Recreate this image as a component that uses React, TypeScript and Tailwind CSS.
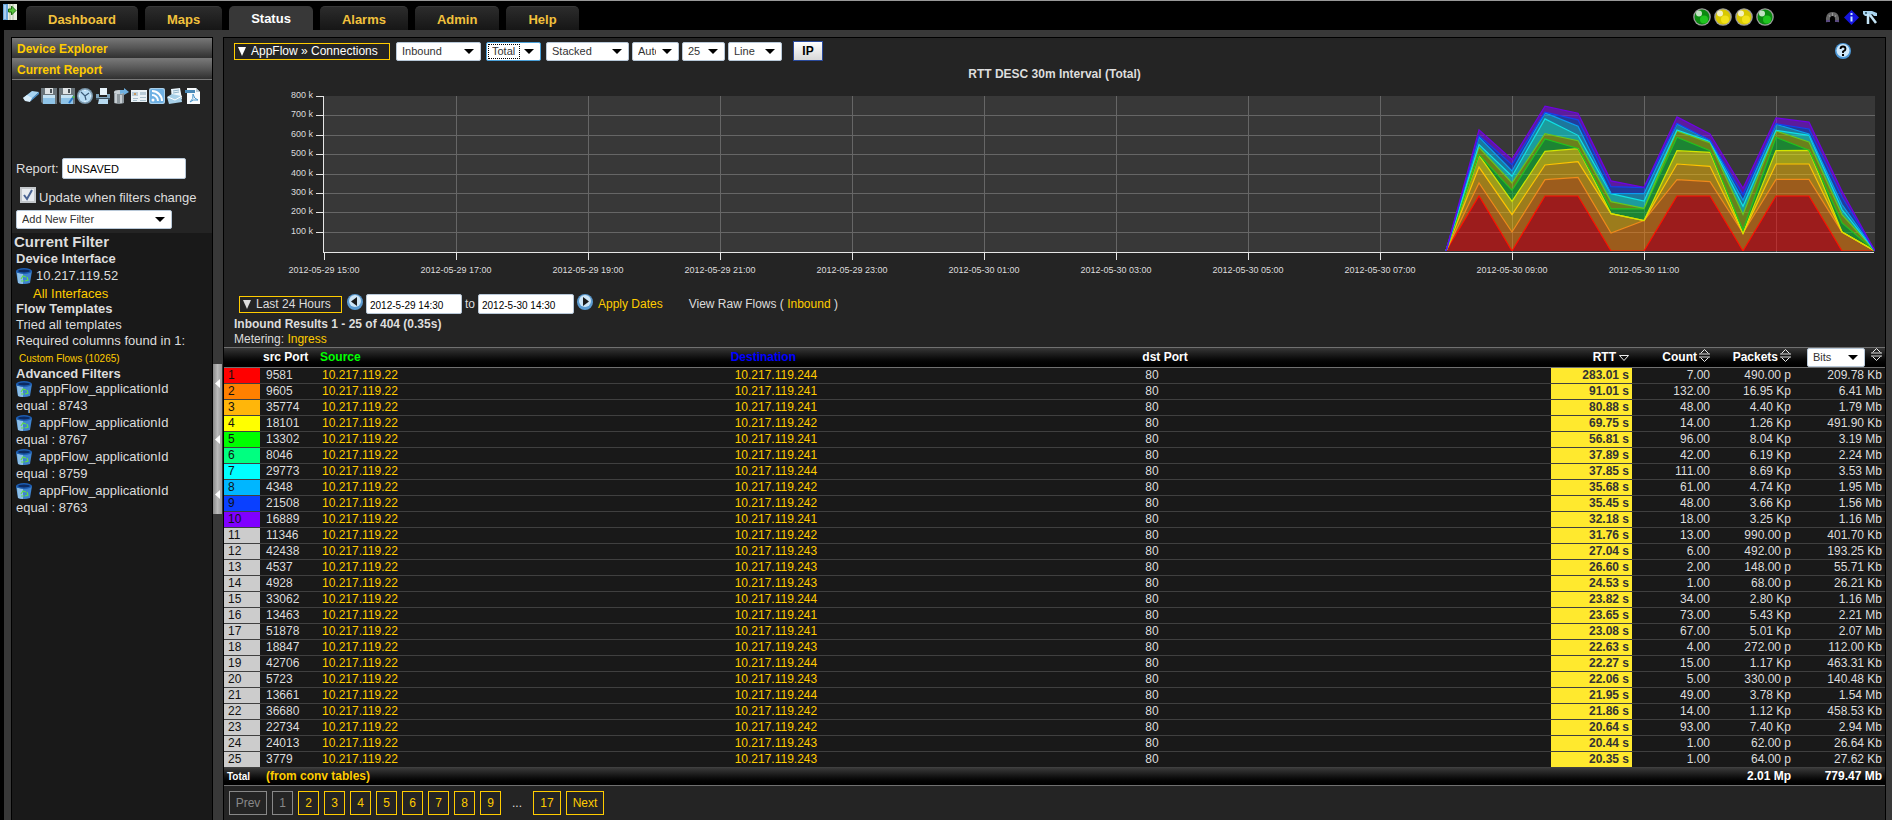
import { useState } from 'react';
import type { ReactNode } from 'react';
import clsx from 'clsx';

const tabs = ['Dashboard', 'Maps', 'Status', 'Alarms', 'Admin', 'Help'];

const appFilters = [8743, 8767, 8759, 8763];

const rankColors = [
  'bg-[#ff0000]',
  'bg-[#ff8000]',
  'bg-[#ffb60a]',
  'bg-[#ffff00]',
  'bg-[#00ff00]',
  'bg-[#00ff80]',
  'bg-[#00ffff]',
  'bg-[#00b6ff]',
  'bg-[#0a40ff]',
  'bg-[#8000ff]',
];

// src port, last octet of the destination, rtt, count, packets, bits
const rows: [string, string, string, string, string, string][] = [
  ['9581', '244', '283.01 s', '7.00', '490.00 p', '209.78 Kb'],
  ['9605', '241', '91.01 s', '132.00', '16.95 Kp', '6.41 Mb'],
  ['35774', '241', '80.88 s', '48.00', '4.40 Kp', '1.79 Mb'],
  ['18101', '242', '69.75 s', '14.00', '1.26 Kp', '491.90 Kb'],
  ['13302', '241', '56.81 s', '96.00', '8.04 Kp', '3.19 Mb'],
  ['8046', '241', '37.89 s', '42.00', '6.19 Kp', '2.24 Mb'],
  ['29773', '244', '37.85 s', '111.00', '8.69 Kp', '3.53 Mb'],
  ['4348', '242', '35.68 s', '61.00', '4.74 Kp', '1.95 Mb'],
  ['21508', '242', '35.45 s', '48.00', '3.66 Kp', '1.56 Mb'],
  ['16889', '241', '32.18 s', '18.00', '3.25 Kp', '1.16 Mb'],
  ['11346', '242', '31.76 s', '13.00', '990.00 p', '401.70 Kb'],
  ['42438', '243', '27.04 s', '6.00', '492.00 p', '193.25 Kb'],
  ['4537', '243', '26.60 s', '2.00', '148.00 p', '55.71 Kb'],
  ['4928', '243', '24.53 s', '1.00', '68.00 p', '26.21 Kb'],
  ['33062', '244', '23.82 s', '34.00', '2.80 Kp', '1.16 Mb'],
  ['13463', '241', '23.65 s', '73.00', '5.43 Kp', '2.21 Mb'],
  ['51878', '241', '23.08 s', '67.00', '5.01 Kp', '2.07 Mb'],
  ['18847', '243', '22.63 s', '4.00', '272.00 p', '112.00 Kb'],
  ['42706', '244', '22.27 s', '15.00', '1.17 Kp', '463.31 Kb'],
  ['5723', '243', '22.06 s', '5.00', '330.00 p', '140.48 Kb'],
  ['13661', '244', '21.95 s', '49.00', '3.78 Kp', '1.54 Mb'],
  ['36680', '242', '21.86 s', '14.00', '1.12 Kp', '458.53 Kb'],
  ['22734', '242', '20.64 s', '93.00', '7.40 Kp', '2.94 Mb'],
  ['24013', '243', '20.44 s', '1.00', '62.00 p', '26.64 Kb'],
  ['3779', '243', '20.35 s', '1.00', '64.00 p', '27.62 Kb'],
];

// cumulative RTT per half hour, in thousands, from 08:00 to 14:30
const series = [
  { fill: '#ff0000', line: '#ff1000', top: [0, 284, 0, 284, 284, 0, 0, 284, 284, 0, 284, 284, 0, 0] },
  { fill: '#ff7f00', line: '#f08a1a', top: [0, 351, 98, 368, 380, 93, 157, 368, 358, 93, 370, 370, 98, 0] },
  { fill: '#ffbf00', line: '#ffc400', top: [0, 433, 188, 444, 461, 193, 157, 449, 437, 91, 449, 449, 98, 0] },
  { fill: '#ffff00', line: '#d2e600', top: [0, 494, 256, 514, 528, 193, 157, 518, 509, 91, 518, 519, 98, 0] },
  { fill: '#00d02e', line: '#22c41e', top: [0, 497, 313, 578, 529, 217, 217, 587, 518, 107, 587, 520, 145, 0] },
  { fill: '#9cc800', line: '#66c81e', top: [0, 535, 351, 606, 569, 255, 220, 620, 558, 188, 620, 563, 188, 0] },
  { fill: '#00ffff', line: '#10e0e6', top: [0, 549, 386, 682, 597, 296, 258, 625, 565, 231, 623, 597, 214, 0] },
  { fill: '#00b6ff', line: '#0a9cf0', top: [0, 588, 413, 713, 644, 297, 296, 656, 570, 262, 654, 604, 240, 0] },
  { fill: '#0a40ff', line: '#1440f0', top: [0, 596, 446, 716, 677, 332, 327, 659, 572, 291, 657, 630, 279, 0] },
  { fill: '#8000ff', line: '#7000e6', top: [0, 625, 472, 747, 711, 362, 329, 692, 604, 324, 687, 665, 308, 0] },
];

const xLabels = [
  '2012-05-29 15:00',
  '2012-05-29 17:00',
  '2012-05-29 19:00',
  '2012-05-29 21:00',
  '2012-05-29 23:00',
  '2012-05-30 01:00',
  '2012-05-30 03:00',
  '2012-05-30 05:00',
  '2012-05-30 07:00',
  '2012-05-30 09:00',
  '2012-05-30 11:00',
];

const HOURS = 23.5;
const PLOT_H = 155;
const yOf = (k: number) => Math.round(PLOT_H - (k / 800) * PLOT_H);
const hourPct = (h: number) => `${(h / HOURS) * 100}%`;

const StackedChart = () => {
  const pts = (values: number[]) => values.map((v, i) => [17 + i / 2, PLOT_H - (v / 800) * PLOT_H]);
  const zero = series[0].top.map(() => 0);

  return (
    <div className="mt-[14px] ml-[100px] mr-[10px] h-[180px]">
      <svg
        className="block w-full h-full overflow-visible"
        role="img"
        aria-label="RTT DESC 30m Interval"
        shapeRendering="crispEdges"
      >
        <rect width="100%" height={156} fill="#383838" />
        {[100, 200, 300, 400, 500, 600, 700, 800].map((k) => (
          <g key={k}>
            {k < 800 && <rect x={0} y={yOf(k)} width="100%" height={1} fill="#666" />}
            <rect x={-8} y={yOf(k)} width={8} height={1} fill="#e6e6e6" />
            <text x={-11} y={yOf(k) + 2} textAnchor="end" fontSize={9} fill="#ddd">
              {k} k
            </text>
          </g>
        ))}
        {[2, 4, 6, 8, 10, 12, 14, 16, 18, 20, 22].map((h) => (
          <rect key={h} x={hourPct(h)} y={0} width={1} height={156} fill="#666" />
        ))}
        <svg
          width="100%"
          height={PLOT_H}
          viewBox={`0 0 ${HOURS} ${PLOT_H}`}
          preserveAspectRatio="none"
          shapeRendering="geometricPrecision"
        >
          {series.map((s, i) => {
            const below = pts(i === 0 ? zero : series[i - 1].top);
            return (
              <polygon
                key={s.fill}
                points={[...pts(s.top), ...below.reverse()].join(' ')}
                fill={s.fill}
                fillOpacity={0.5}
              />
            );
          })}
          {series.map((s) => (
            <polyline
              key={s.line}
              points={pts(s.top).join(' ')}
              fill="none"
              stroke={s.line}
              strokeWidth={1.2}
              vectorEffect="non-scaling-stroke"
            />
          ))}
        </svg>
        <rect x={-1} y={0} width={1} height={157} fill="#e6e6e6" />
        <rect x={-1} y={156} width="100%" height={1} fill="#e6e6e6" />
        {xLabels.map((label, i) => (
          <g key={label}>
            <rect x={hourPct(i * 2)} y={156} width={1} height={8} fill="#e6e6e6" />
            <text x={hourPct(i * 2)} y={177} textAnchor="middle" fontSize={9} fill="#ddd">
              {label}
            </text>
          </g>
        ))}
      </svg>
    </div>
  );
};

const Dropdown = ({
  label,
  options,
  className,
  focused,
}: {
  label: string;
  options: string[];
  className?: string;
  focused?: boolean;
}) => (
  <span className={clsx('relative inline-block h-[19px] shrink-0 align-top', className)}>
    <select
      aria-label={label}
      className={clsx(
        'block appearance-none w-full h-full pl-[5px] pr-[22px] text-[11px] leading-[15px] font-normal bg-white text-[#333] border rounded-[2px] outline-none',
        focused ? 'border-[#4aa0d8]' : 'border-[#b8c8d8]'
      )}
    >
      {options.map((o) => (
        <option key={o}>{o}</option>
      ))}
    </select>
    {focused && (
      <span className="absolute top-[2px] bottom-[2px] left-[2px] right-[21px] border border-dotted border-black pointer-events-none" />
    )}
    <svg className="absolute right-[7px] top-[7px] pointer-events-none" width="10" height="5" viewBox="0 0 10 5">
      <path d="M0 0h10L5 5z" fill="#000" />
    </svg>
  </span>
);

const ReportIcon = ({ title, children }: { title: string; children: ReactNode }) => (
  <button type="button" aria-label={title} className="cursor-pointer">
    <svg width="16" height="16" viewBox="0 0 16 16">
      {children}
    </svg>
  </button>
);

const Floppy = () => (
  <>
    <path d="M0 0h16v16H2l-2-2z" fill="#6a747a" />
    <path d="M4 0h8v6H4z" fill="#dfe4e6" />
    <path d="M9 1h2v4H9z" fill="#4a5258" />
    <path d="M2 7h12v9H2z" fill="#8fc4e8" />
    <path d="M2 7h12v3H2z" fill="#c4e2f4" />
  </>
);

const ReportIcons = () => (
  <div className="flex gap-[2px] ml-[11px] mt-2">
    <ReportIcon title="Clear report">
      <path d="M0 10l9-7 7 1-8 8z" fill="#a8d4f2" />
      <path d="M5 12l3 1 8-7V4l-8 7z" fill="#4f8fc4" />
      <path d="M0 10l4-3 5 3-2 4-5-1z" fill="#d9eefb" />
    </ReportIcon>
    <ReportIcon title="Save">
      <Floppy />
    </ReportIcon>
    <ReportIcon title="Save as">
      <Floppy />
      <path d="M15 8l-5 7" stroke="#2a78c8" strokeWidth="2" />
      <path d="M15 8l-1 2" stroke="#58b848" strokeWidth="2" />
    </ReportIcon>
    <ReportIcon title="Schedule">
      <circle cx="8" cy="8" r="8" fill="#7b97ab" />
      <circle cx="8" cy="8" r="6.500" fill="#b8dcf4" />
      <path d="M4 4l4 4 4-3M8 8l1 4" stroke="#3a5a78" strokeWidth="1.200" fill="none" />
      <path d="M8 2v1M8 13v1M2 8h1M13 8h1" stroke="#fff" />
    </ReportIcon>
    <ReportIcon title="Print">
      <path d="M5 0h7v7H5z" fill="#e6f3fb" />
      <path d="M1 6h3v3h8V6h3v6H1z" fill="#7fa6c0" />
      <path d="M1 10h14v2H1z" fill="#3d5160" />
      <path d="M4 11h9v5H3z" fill="#b7daf0" />
    </ReportIcon>
    <ReportIcon title="Export">
      <path d="M1 4h10v11q-5 2-10 0z" fill="#8d979d" />
      <ellipse cx="6" cy="4" rx="5" ry="2" fill="#c9d1d6" />
      <path d="M3 6v9M8 7v8" stroke="#d9dfe3" strokeWidth="1.500" />
      <path d="M7 6V2h4V0l5 4-5 3V5z" fill="#6fb0e0" />
    </ReportIcon>
    <ReportIcon title="Dashboard">
      <path d="M0 2h16v12H0z" fill="#eaf2f6" />
      <path d="M1 4h6v4H1zM9 4h6v3H9z" fill="#b9ccd8" />
      <path d="M2 10.500h5M9 9.500h6M9 12.500h6M2 12.500h4" stroke="#a9bfcc" />
      <path d="M3 5h2v2H3z" fill="#c9975c" />
    </ReportIcon>
    <ReportIcon title="RSS feed">
      <rect width="16" height="16" rx="2" fill="#a9cfea" />
      <rect x="1" y="1" width="14" height="14" rx="2" fill="#6fb1e4" />
      <circle cx="4" cy="12" r="1.500" fill="#fff" />
      <path d="M3 7a6 6 0 016 6M3 3a10 10 0 0110 10" stroke="#fff" strokeWidth="2" fill="none" />
    </ReportIcon>
    <ReportIcon title="Email report">
      <path d="M4 1l9-1 2 11-10 2z" fill="#eaf5fc" />
      <path d="M6 3l6-1M6 5l6-1" stroke="#8fb2c8" />
      <path d="M0 9l5-3 9 2 1 6-13 2z" fill="#a6cfe8" />
      <path d="M1 9l7 3 7-4" stroke="#fff" fill="none" />
    </ReportIcon>
    <ReportIcon title="PDF">
      <path d="M2 0h9l4 4v12H2z" fill="#f8fbfd" />
      <path d="M0 2h10v3H0z" fill="#4a8ab8" />
      <path d="M5 14q4-3 3-8 1 5 5 6-5-1-8 2z" stroke="#4b97cc" fill="none" />
      <path d="M11 0v4h4z" fill="#b9cbd6" />
    </ReportIcon>
  </div>
);

const TrashIcon = () => (
  <svg width="16" height="16" viewBox="0 0 16 16" className="shrink-0">
    <path d="M0 3h16l-2 12q-6 2-12 0z" fill="#3f84cf" />
    <path d="M1 5h6v11q-3 0-5-1z" fill="#8cbfe8" />
    <ellipse cx="8" cy="3" rx="8" ry="3" fill="#1c5cb0" />
    <ellipse cx="8" cy="3" rx="6" ry="1.500" fill="#0c2a60" />
    <path d="M5 11l2-3 3 1M11 9l1 3-3 1M8 13H5" stroke="#5edc4a" strokeWidth="1.200" fill="none" />
  </svg>
);

const RoundArrow = ({ direction }: { direction: 'left' | 'right' }) => (
  <svg width="16" height="16" viewBox="0 0 16 16">
    <circle cx="8" cy="8" r="8" fill="#5c9bd0" />
    <circle cx="8" cy="7" r="6" fill="#cfe6f6" />
    <path d={direction === 'left' ? 'M10 3v9L4 7.500z' : 'M6 3v9l6-4.500z'} fill="#1a1a1a" />
  </svg>
);

const StatusLight = ({ color }: { color: 'green' | 'yellow' }) => (
  <svg width="18" height="18" viewBox="0 0 18 18">
    <circle cx="9" cy="9" r="8.800" fill="#9c9c9c" />
    <circle cx="9" cy="9" r="7.500" fill={color === 'green' ? '#0a8a10' : '#d8c800'} />
    <circle cx="11" cy="11.500" r="4" fill={color === 'green' ? '#1fc41f' : '#f2e21a'} />
    <circle cx="6" cy="5.500" r="3" fill="#fff" fillOpacity="0.75" />
  </svg>
);

const SortIcon = () => (
  <svg width="11" height="13" viewBox="0 0 11 13" className="inline-block align-top shrink-0">
    <path d="M1.500 4.500L5.500 .5 9.500 4.500M1.500 8.500L5.500 12.500 9.500 8.500" fill="none" stroke="#eee" />
    <path d="M0 5h11M0 8h11" stroke="#ddd" />
  </svg>
);

const TopBar = ({ active, onSelect }: { active: string; onSelect: (tab: string) => void }) => (
  <header className="flex items-end h-[30px] bg-black border-t border-[#999]">
    <button type="button" aria-label="Toggle sidebar" className="self-start ml-[3px] mt-[3px] w-[14px] h-4">
      <svg width="14" height="16" viewBox="0 0 14 16">
        <path d="M0 0h14v16H0z" fill="#e8eee0" />
        <path d="M0 0h5v16H0z" fill="#6aa6dc" />
        <path d="M1 1h2v14H1z" fill="#a9cdf0" />
        <path d="M7 0v16M10 0v16" stroke="#b4bca8" />
        <path d="M5.500 5h3V2l4.500 4.500L8.500 11V8h-3z" fill="#58c43a" stroke="#1c7010" />
      </svg>
    </button>
    <nav className="flex gap-[7px] ml-[9px] text-[13px] font-bold">
      {tabs.map((tab) => (
        <button
          key={tab}
          type="button"
          onClick={() => onSelect(tab)}
          className={clsx(
            'h-6 px-[22px] pt-[2px] rounded-t-[5px] cursor-pointer',
            tab === active
              ? 'bg-[#383838] text-white'
              : 'bg-linear-to-b from-[#2c2c2c] to-[#161616] border-t border-[#383838] text-[#f2c13c]'
          )}
        >
          {tab}
        </button>
      ))}
    </nav>
    <div className="flex items-center gap-[3px] ml-auto mb-1 mr-[51px]">
      <StatusLight color="green" />
      <StatusLight color="yellow" />
      <StatusLight color="yellow" />
      <StatusLight color="green" />
    </div>
    <div className="flex items-center gap-1 mb-[5px] mr-[14px]">
      <svg width="15" height="15" viewBox="0 0 15 15">
        <path d="M3 12Q2 4 7.500 4T12 12" fill="none" stroke="#666" strokeWidth="4" />
        <path d="M1 10h4v2H1zM10 10h4v2h-4z" fill="#5a4a80" />
        <path d="M4 5l1 2M7.500 3v3M11 5l-1 2" stroke="#999" />
      </svg>
      <svg width="15" height="15" viewBox="0 0 15 15">
        <path d="M7.500 0L15 7.500 7.500 15 0 7.500z" fill="#1414dc" />
        <path d="M6.500 6.500h2v5h-2zM6.500 3h2v2h-2z" fill="#c4e4ff" />
      </svg>
      <svg width="15" height="15" viewBox="0 0 15 15">
        <path d="M0 1h9l5 2v3h-3L9 4 6 6H2L0 4z" fill="#a9d4ee" />
        <path d="M5 4v10M7 5l6 8" stroke="#c4e4f6" strokeWidth="2.500" fill="none" />
        <circle cx="3" cy="3" r="1" fill="#245" />
      </svg>
    </div>
  </header>
);

const Sidebar = () => (
  <aside className="w-[202px] shrink-0 flex flex-col border border-b-0 border-black bg-[#242424] text-[13px] text-[#ddd]">
    {['Device Explorer', 'Current Report'].map((name) => (
      <button
        key={name}
        type="button"
        className="block h-[21px] pl-[5px] pt-px text-left text-[12px] leading-5 font-bold text-[#ffcc00] border-b border-[#777] bg-linear-to-b from-[#777] via-[#555] via-50% to-[#303030] cursor-pointer"
      >
        {name}
      </button>
    ))}
    <ReportIcons />
    <div className="flex items-center gap-[3px] mt-[54px] pl-1">
      <label htmlFor="report-name">Report:</label>
      <input
        id="report-name"
        defaultValue="UNSAVED"
        className="w-[124px] h-[21px] px-1 text-[11px] text-black bg-white border border-[#b8c8d8] rounded-[2px]"
      />
    </div>
    <label className="flex items-center gap-[3px] h-[22px] mt-[5px] pl-2">
      <span className="relative w-4 h-4 shrink-0">
        <input
          type="checkbox"
          defaultChecked
          className="peer appearance-none block w-4 h-4 bg-[#e8ecf0] border-2 border-[#c4c8cc]"
        />
        <svg
          className="absolute inset-0 hidden peer-checked:block pointer-events-none"
          width="16"
          height="16"
          viewBox="0 0 16 16"
        >
          <path d="M4 8l3 4 5-9" fill="none" stroke="#4a6494" strokeWidth="2" />
        </svg>
      </span>
      <span className="whitespace-nowrap pt-[5px]">Update when filters change</span>
    </label>
    <div className="mt-1 pl-1 pb-[3px]">
      <Dropdown label="Add filter" options={['Add New Filter']} className="w-[156px]" />
    </div>
    <div className="grow bg-[#191919] pl-1 leading-4">
      <h2 className="-ml-[2px] text-[15px] leading-[18px] font-bold">Current Filter</h2>
      <h3 className="font-bold">Device Interface</h3>
      <p className="flex items-center gap-1 h-[19px]">
        <TrashIcon />
        10.217.119.52
      </p>
      <p className="pl-[17px] leading-[15px]">
        <a href="#interfaces" className="text-[#ffcc00]">
          All Interfaces
        </a>
      </p>
      <h3 className="font-bold">Flow Templates</h3>
      <p>Tried all templates</p>
      <p>Required columns found in 1:</p>
      <p className="pl-[3px] pt-[2px] text-[10px]">
        <a href="#template" className="text-[#ffcc00]">
          Custom Flows (10265)
        </a>
      </p>
      <h3 className="leading-[13px] font-bold">Advanced Filters</h3>
      {appFilters.map((id) => (
        <div key={id}>
          <p className="flex items-center gap-[7px] h-[18px]">
            <TrashIcon />
            appFlow_applicationId
          </p>
          <p>equal : {id}</p>
        </div>
      ))}
    </div>
  </aside>
);

const Splitter = () => (
  <div className="w-[9px] shrink-0 mt-[327px]">
    <button
      type="button"
      aria-label="Collapse sidebar"
      className="flex flex-col justify-between items-end w-full h-[150px] py-[15px] pr-[2px] bg-linear-to-r from-[#888] via-[#bbb] to-[#999] cursor-pointer"
    >
      {[0, 1, 2].map((i) => (
        <svg key={i} width="5" height="9" viewBox="0 0 5 9">
          <path d="M5 0v9L0 4.500z" fill="#fff" />
        </svg>
      ))}
    </button>
  </div>
);

const MenuButton = ({ className, children }: { className: string; children: ReactNode }) => (
  <button
    type="button"
    className={clsx(
      'flex items-center gap-[5px] h-[17px] pl-[3px] leading-[15px] border border-[#ffcc00] whitespace-nowrap cursor-pointer',
      className
    )}
  >
    <svg width="8" height="9" viewBox="0 0 8 9" className="shrink-0">
      <path d="M0 0h8L4 9z" fill="currentColor" />
    </svg>
    {children}
  </button>
);

const Toolbar = () => (
  <div className="flex items-center h-5 mt-[3px] pl-[10px] pr-[34px]">
    <MenuButton className="w-[156px] text-white">AppFlow » Connections</MenuButton>
    <div className="flex gap-[5px] ml-[6px]">
      <Dropdown label="Direction" options={['Inbound', 'Outbound']} className="w-[85px]" />
      <Dropdown label="Rate" options={['Total', 'Rate']} className="w-[55px]" focused />
      <Dropdown label="Graph type" options={['Stacked', 'Unstacked']} className="w-[83px]" />
    </div>
    <div className="flex gap-[3px] ml-[3px]">
      <Dropdown label="Interval" options={['Auto', '1m']} className="w-[47px]" />
      <Dropdown label="Rows" options={['25', '50']} className="w-[43px]" />
      <Dropdown label="Style" options={['Line', 'Bar']} className="w-[54px]" />
    </div>
    <button
      type="button"
      className="ml-[11px] w-[30px] h-5 font-bold text-black bg-linear-to-b from-white to-[#d8d8d8] border border-[#2a4a9c] cursor-pointer"
    >
      IP
    </button>
    <a href="#help" aria-label="Help" className="ml-auto">
      <svg width="16" height="16" viewBox="0 0 16 16" className="block">
        <circle cx="8" cy="8" r="8" fill="#4c98d8" />
        <circle cx="8" cy="7.500" r="6.500" fill="#cfe8fa" />
        <path d="M5.500 6q0-2.500 2.500-2.500T10.500 6Q10.500 7.500 8 8.500V10" fill="none" stroke="#000" strokeWidth="1.800" />
        <path d="M7 11h2v2H7z" fill="#000" />
      </svg>
    </a>
  </div>
);

const DateRange = () => (
  <div className="flex items-center h-5 mt-[18px] pl-[15px]">
    <MenuButton className="w-[103px]">Last 24 Hours</MenuButton>
    <button type="button" aria-label="Previous period" className="ml-[5px] mb-1 cursor-pointer">
      <RoundArrow direction="left" />
    </button>
    <input
      aria-label="Start date"
      defaultValue="2012-5-29 14:30"
      className="ml-[3px] w-[96px] h-5 px-[3px] pt-[2px] text-[10px] text-black bg-white border border-[#b8c8d8] rounded-[2px]"
    />
    <span className="w-4 text-center">to</span>
    <input
      aria-label="End date"
      defaultValue="2012-5-30 14:30"
      className="w-[96px] h-5 px-[3px] pt-[2px] text-[10px] text-black bg-white border border-[#b8c8d8] rounded-[2px]"
    />
    <button type="button" aria-label="Next period" className="ml-[3px] mb-1 cursor-pointer">
      <RoundArrow direction="right" />
    </button>
    <button type="button" className="ml-[5px] text-[#ffcc00] whitespace-nowrap cursor-pointer">
      Apply Dates
    </button>
    <span className="ml-[26px] whitespace-nowrap">
      View Raw Flows ({' '}
      <a href="#raw-inbound" className="text-[#ffcc00]">
        Inbound
      </a>{' '}
      )
    </span>
  </div>
);

const ResultsTable = () => (
  <table className="w-full table-fixed border-separate border-spacing-0">
    <colgroup>
      <col className="w-9" />
      <col className="w-14" />
      <col />
      <col />
      <col />
      <col className="w-[81px]" />
      <col className="w-[81px]" />
      <col className="w-[81px]" />
      <col className="w-[91px]" />
    </colgroup>
    <thead>
      <tr className="h-[21px] bg-linear-to-b from-[#3a3a3a] to-black text-white text-left leading-[17px] whitespace-nowrap *:border-t *:border-b *:border-[#707070] *:p-0 *:align-middle">
        <th />
        <th>
          <span className="pl-[3px]">src Port</span>
        </th>
        <th>
          <span className="pl-1 text-[#00ff00]">Source</span>
        </th>
        <th>
          <span className="pl-[3px] text-[#0000ff]">Destination</span>
        </th>
        <th>
          <span className="pl-[3px]">dst Port</span>
        </th>
        <th className="text-right">
          <span className="inline-flex items-center gap-[3px] pr-[3px]">
            RTT
            <svg width="10" height="6" viewBox="0 0 10 6">
              <path d="M.5 .5h9L5 5.500z" fill="none" stroke="#eee" />
            </svg>
          </span>
        </th>
        <th className="text-right">
          <span className="inline-flex gap-[2px] pr-[3px]">
            Count <SortIcon />
          </span>
        </th>
        <th className="text-right">
          <span className="inline-flex gap-[2px] pr-[3px]">
            Packets <SortIcon />
          </span>
        </th>
        <th>
          <span className="flex justify-end gap-[6px] pr-[3px]">
            <Dropdown label="Units" options={['Bits', 'Bytes']} className="w-[58px]" />
            <SortIcon />
          </span>
        </th>
      </tr>
    </thead>
    <tbody>
      {rows.map(([port, host, rtt, count, packets, bits], i) => (
        <tr
          key={port}
          className="h-4 bg-[#191919] leading-[15px] *:p-0 *:border-b *:border-[#404040]"
        >
          <td className={clsx('text-[#111]', rankColors[i] ?? 'bg-[#ccc]')}>
            <span className="pl-1">{i + 1}</span>
          </td>
          <td>
            <span className="pl-[6px]">{port}</span>
          </td>
          <td>
            <a href="#source" className="pl-[6px] text-[#ffcc00]">
              10.217.119.22
            </a>
          </td>
          <td>
            <a href="#destination" className="pl-[7px] text-[#ffcc00]">
              10.217.119.{host}
            </a>
          </td>
          <td>
            <span className="pl-[6px]">80</span>
          </td>
          <td className="bg-[#ffe92e] font-bold text-[#333] text-right">
            <span className="pr-[3px]">{rtt}</span>
          </td>
          <td className="text-right">
            <span className="pr-[3px]">{count}</span>
          </td>
          <td className="text-right">
            <span className="pr-[3px]">{packets}</span>
          </td>
          <td className="text-right">
            <span className="pr-[3px]">{bits}</span>
          </td>
        </tr>
      ))}
    </tbody>
    <tfoot>
      <tr className="h-[18px] bg-linear-to-b from-[#3a3a3a] to-black font-bold text-white leading-[17px] *:p-0 *:border-b *:border-[#707070]">
        <td className="text-[10px]">
          <span className="pl-[3px]">Total</span>
        </td>
        <td colSpan={6}>
          <span className="pl-[6px] text-[#ffcc00]">(from conv tables)</span>
        </td>
        <td className="text-right">
          <span className="pr-[3px]">2.01 Mp</span>
        </td>
        <td className="text-right">
          <span className="pr-[3px]">779.47 Mb</span>
        </td>
      </tr>
    </tfoot>
  </table>
);

const pageWidth = (p: string) => {
  if (p.length === 1) return 'w-[21px]';
  return p.length === 2 ? 'w-7' : 'w-[38px]';
};

const Pagination = () => (
  <nav className="flex gap-[5px] mt-[5px] pl-[5px] pb-1">
    {['Prev', '1', '2', '3', '4', '5', '6', '7', '8', '9', '...', '17', 'Next'].map((p, i) =>
      p === '...' ? (
        <span key={p} className="w-[22px] leading-6 text-center">
          {p}
        </span>
      ) : (
        <button
          key={p}
          type="button"
          disabled={i < 2}
          className={clsx(
            'h-6 border border-[#ffcc00] text-[#ffcc00] text-center cursor-pointer disabled:border-[#888] disabled:text-[#888] disabled:cursor-default',
            pageWidth(p)
          )}
        >
          {p}
        </button>
      )
    )}
  </nav>
);

const App = () => {
  const [active, setActive] = useState('Status');

  return (
    <div className="flex flex-col min-h-screen bg-black font-['Liberation_Sans',Arial,sans-serif] text-[12px] text-[#ddd]">
      <TopBar active={active} onSelect={setActive} />
      <div className="grow flex ml-1 pt-[7px] pl-[7px] pr-[6px] bg-[#383838]">
        <Sidebar />
        <Splitter />
        <main className="grow min-w-0 ml-px border border-b-0 border-black bg-[#242424]">
          <Toolbar />
          <h1 className="mt-[5px] ml-[100px] mr-[100px] leading-4 font-bold text-center">
            RTT DESC 30m Interval (Total)
          </h1>
          <StackedChart />
          <DateRange />
          <div className="mt-[3px] pl-[10px] leading-[15px]">
            <p className="font-bold">Inbound Results 1 - 25 of 404 (0.35s)</p>
            <p>
              Metering:{' '}
              <a href="#metering" className="text-[#ffcc00]">
                Ingress
              </a>
            </p>
          </div>
          <ResultsTable />
          <Pagination />
        </main>
      </div>
    </div>
  );
};

export default App;
